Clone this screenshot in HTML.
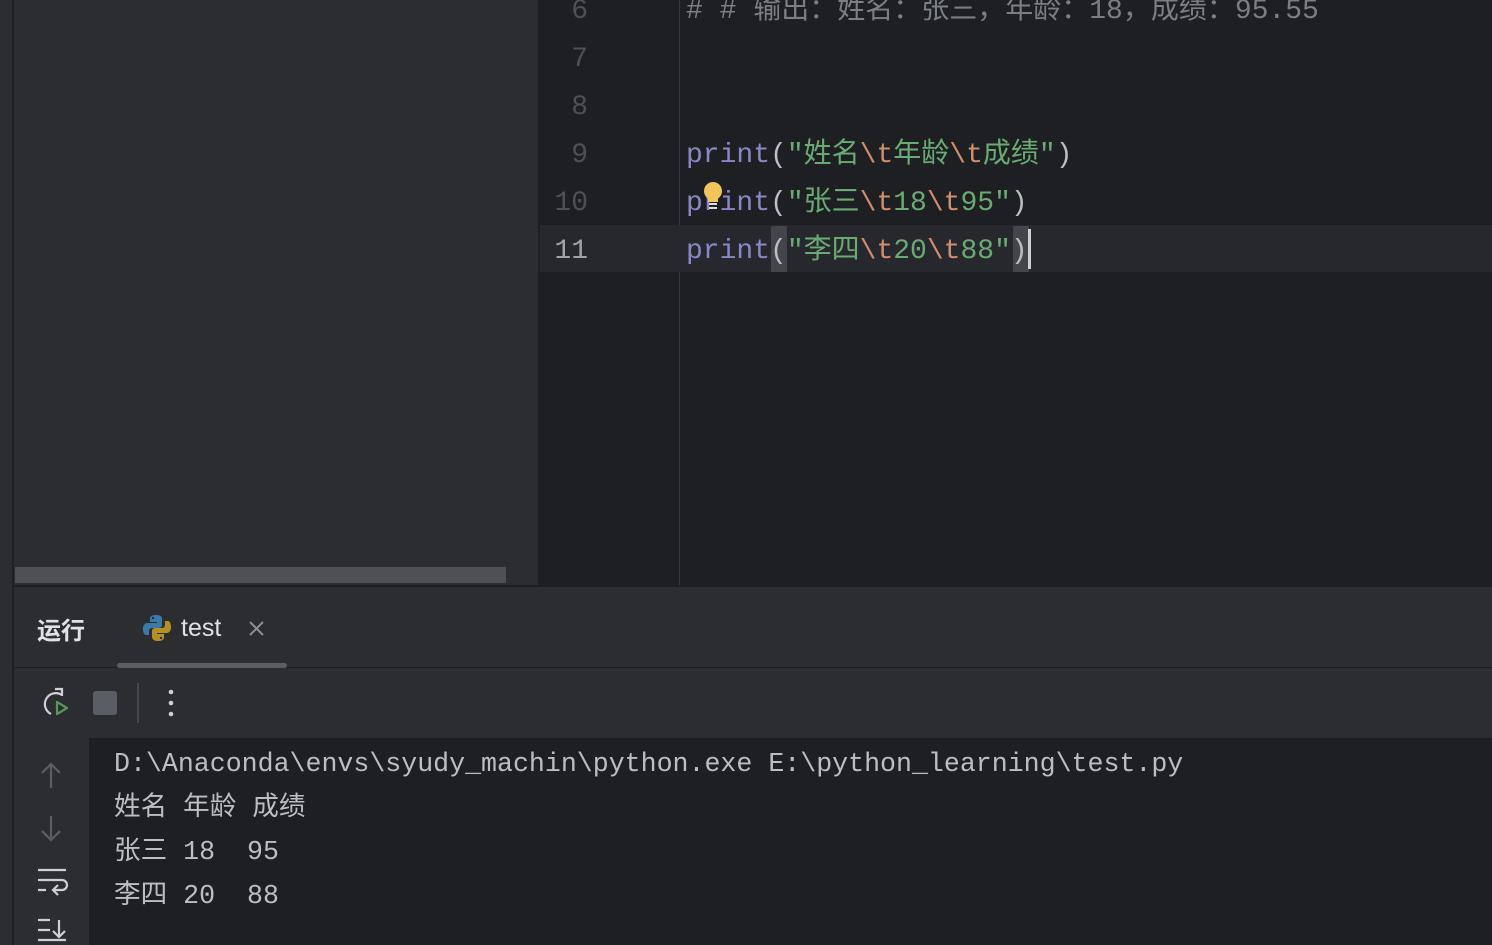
<!DOCTYPE html>
<html><head><meta charset="utf-8">
<style>
*{margin:0;padding:0;box-sizing:border-box}
body{width:1492px;height:945px;overflow:hidden;background:#1e1f22;position:relative;font-family:"Liberation Mono","Noto Sans CJK SC",monospace}
.a{position:absolute}
.code{font-size:28px;line-height:48px;white-space:pre;color:#bcbec4}
.kw{color:#8888c6}.s{color:#6aab73}.e{color:#cf8e6d}.c{color:#7a7e85}
.ln{color:#4b5059;font-size:28px;line-height:48px;width:48px;text-align:right}
.con{font-size:26.6px;line-height:44px;white-space:pre;color:#bcbec4}
</style></head><body>
<div class="a" style="left:0;top:0;width:12px;height:945px;background:#2b2d30"></div>
<div class="a" style="left:12px;top:0;width:2px;height:945px;background:#1e1f22"></div>
<div class="a" style="left:14px;top:0;width:524px;height:585px;background:#2b2d30"></div>
<div class="a" style="left:15px;top:567px;width:491px;height:16px;background:#4e5054"></div>
<div class="a" style="left:538px;top:0;width:2px;height:585px;background:#1e1f22"></div>
<div class="a" style="left:679px;top:0;width:1px;height:585px;background:#393b40"></div>
<div class="a" style="left:540px;top:225px;width:952px;height:47px;background:#26282e"></div>
<div class="a" style="left:771px;top:226px;width:16px;height:46px;background:#43454a"></div>
<div class="a" style="left:1013px;top:226px;width:16px;height:46px;background:#43454a"></div>
<div class="a" style="left:1028px;top:229px;width:3px;height:40px;background:#ced0d6"></div>
<div class="a ln" style="left:540px;top:-12px">6<br>7<br>8<br>9<br>10<br><span style="color:#a1a3ab">11</span></div>
<div class="a code" style="left:686px;top:-12px"><span class="c"># # 输出：姓名：张三，年龄：18，成绩：95.55</span>


<span class="kw">print</span>(<span class="s">"姓名</span><span class="e">\t</span><span class="s">年龄</span><span class="e">\t</span><span class="s">成绩"</span>)
<span class="kw">print</span>(<span class="s">"张三</span><span class="e">\t</span><span class="s">18</span><span class="e">\t</span><span class="s">95"</span>)
<span class="kw">print</span>(<span class="s">"李四</span><span class="e">\t</span><span class="s">20</span><span class="e">\t</span><span class="s">88"</span>)</div>
<svg class="a" style="left:702px;top:181px" width="22" height="30"><circle cx="11" cy="10" r="9" fill="#f2c55c"/><rect x="6" y="17" width="10" height="4" fill="#f2c55c"/><rect x="7" y="22" width="8" height="2" fill="#ddd"/><rect x="7" y="26" width="8" height="2" fill="#ddd"/></svg>
<!-- bottom panel -->
<div class="a" style="left:14px;top:585px;width:1478px;height:2px;background:#1e1f22"></div>
<div class="a" style="left:14px;top:587px;width:1478px;height:151px;background:#2b2d30"></div>
<div class="a" style="left:14px;top:667px;width:1478px;height:1px;background:#1e1f22"></div>
<div class="a" style="left:37px;top:611px;font:bold 24px 'Liberation Sans','Noto Sans CJK SC',sans-serif;color:#dfe1e5">运行</div>
<svg class="a" style="left:143px;top:614px" width="28" height="28" viewBox="0 0 28 28"><path d="M13 1c-6 0-6 3-6 3v4h7v1H4s-4 0-4 6 3 6 3 6h3v-4s0-3 3-3h7s3 0 3-3V4s0-3-6-3z" fill="#3b7aa8"/><path d="M15 27c6 0 6-3 6-3v-4h-7v-1h10s4 0 4-6-3-6-3-6h-3v4s0 3-3 3h-7s-3 0-3 3v6s0 4 6 4z" fill="#b39120"/><circle cx="10" cy="4" r="1.2" fill="#2b2d30"/><circle cx="18" cy="24" r="1.2" fill="#2b2d30"/></svg>
<div class="a" style="left:181px;top:614px;font:25px 'Liberation Sans',sans-serif;color:#dfe1e5">test</div>
<svg class="a" style="left:248px;top:620px" width="17" height="17"><path d="M2 2L15 15M15 2L2 15" stroke="#8c8f94" stroke-width="2"/></svg>
<div class="a" style="left:117px;top:663px;width:170px;height:5px;border-radius:3px;background:#5a5d63"></div>
<svg class="a" style="left:38px;top:687px" width="34" height="34"><path d="M24 8A11 11 0 1 0 13 27" stroke="#ced0d6" stroke-width="2.2" fill="none"/><path d="M17 2h7v7" stroke="#ced0d6" stroke-width="2.2" fill="none"/><path d="M19 15l10 6-10 6z" stroke="#57965c" stroke-width="2.2" fill="none" stroke-linejoin="round"/></svg>
<div class="a" style="left:93px;top:691px;width:24px;height:24px;border-radius:3px;background:#5a5d63"></div>
<div class="a" style="left:137px;top:683px;width:2px;height:40px;background:#43454a"></div>
<svg class="a" style="left:165px;top:688px" width="12" height="30"><circle cx="6" cy="4" r="2.3" fill="#ced0d6"/><circle cx="6" cy="15" r="2.3" fill="#ced0d6"/><circle cx="6" cy="26" r="2.3" fill="#ced0d6"/></svg>
<div class="a" style="left:14px;top:738px;width:75px;height:207px;background:#2b2d30"></div>
<svg class="a" style="left:36px;top:760px" width="32" height="185" fill="none" stroke-width="2.2"><path d="M15 4v24M6 13l9-9 9 9" stroke="#5a5d63"/><path d="M15 56v24M6 71l9 9 9-9" stroke="#5a5d63"/><path d="M2 110h28M2 120h24a5 5 0 0 1 0 10h-8M22 125l-5 5 5 5M2 130h8" stroke="#ced0d6"/><path d="M2 160h12M2 170h12M2 180h28M23 160v17M17 171l6 6 6-6" stroke="#ced0d6"/></svg>
<div class="a con" style="left:114px;top:742px">D:\Anaconda\envs\syudy_machin\python.exe E:\python_learning\test.py
姓名 年龄 成绩
张三 18  95
李四 20  88</div>
</body></html>
